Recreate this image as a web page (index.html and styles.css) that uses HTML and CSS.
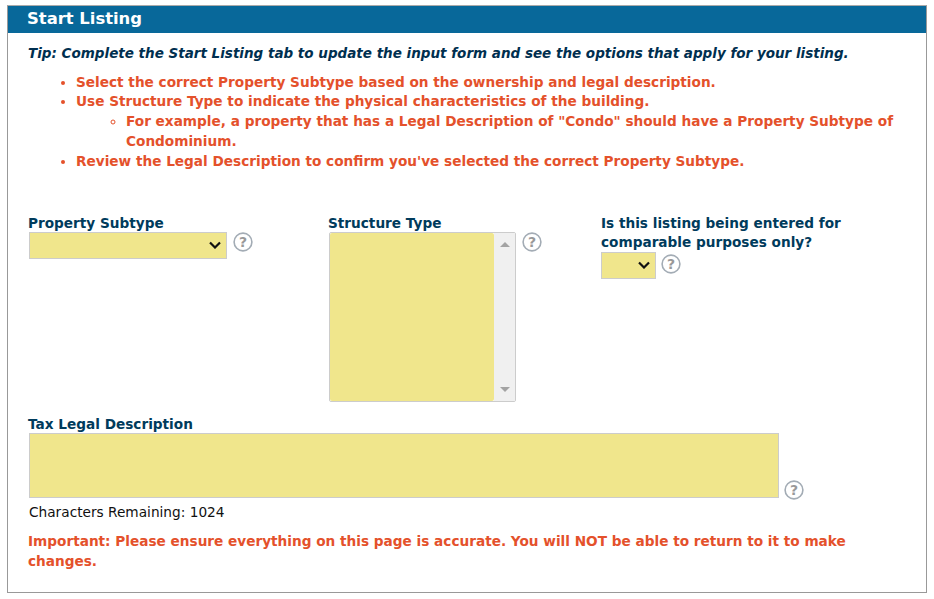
FILE: index.html
```html
<!DOCTYPE html>
<html>
<head>
<meta charset="utf-8">
<title>Start Listing</title>
<link rel="stylesheet" href="styles.css">
</head>
<body>
<div class="panel">
  <div class="panelHeading">Start Listing</div>
  <div class="panelBody">
    <p class="tip">Tip: Complete the Start Listing tab to update the input form and see the options that apply for your listing.</p>
    <ul class="notes">
      <li>Select the correct Property Subtype based on the ownership and legal description.</li>
      <li>Use Structure Type to indicate the physical characteristics of the building.
        <ul>
          <li>For example, a property that has a Legal Description of "Condo" should have a Property Subtype of Condominium.</li>
        </ul>
      </li>
      <li>Review the Legal Description to confirm you've selected the correct Property Subtype.</li>
    </ul>

    <div class="fieldRow">
      <div class="field">
        <label class="fieldLabel" for="subtype">Property Subtype</label>
        <div class="control">
          <select id="subtype" class="dropdown subtypeSelect"><option></option></select>
          <svg class="help" viewBox="0 0 20 20"><circle cx="10" cy="10" r="8.9"/><text x="10" y="15">?</text></svg>
        </div>
      </div>
      <div class="field">
        <label class="fieldLabel" for="structure">Structure Type</label>
        <div class="control">
          <div class="listbox">
            <select id="structure" class="listField" multiple></select>
            <div class="scrollbar">
              <span class="arrowUp"></span>
              <span class="arrowDown"></span>
            </div>
          </div>
          <svg class="help" viewBox="0 0 20 20"><circle cx="10" cy="10" r="8.9"/><text x="10" y="15">?</text></svg>
        </div>
      </div>
      <div class="field">
        <label class="fieldLabel" for="comparable">Is this listing being entered for comparable purposes only?</label>
        <div class="control comparableControl">
          <select id="comparable" class="dropdown comparableSelect"><option></option></select>
          <svg class="help" viewBox="0 0 20 20"><circle cx="10" cy="10" r="8.9"/><text x="10" y="15">?</text></svg>
        </div>
      </div>
    </div>

    <label class="fieldLabel" for="legal">Tax Legal Description</label>
    <div class="control legalControl">
      <textarea id="legal" class="legalText"></textarea>
      <svg class="help" viewBox="0 0 20 20"><circle cx="10" cy="10" r="8.9"/><text x="10" y="15">?</text></svg>
    </div>
    <div class="charCount">Characters Remaining: 1024</div>

    <p class="important">Important: Please ensure everything on this page is accurate. You will NOT be able to return to it to make changes.</p>
  </div>
</div>
</body>
</html>
```

FILE: styles.css
```css
html, body {
  margin: 0;
  padding: 0;
  background-color: #fff;
}

body {
  padding: 5px 7px 6px 7px;
  font: 13.65px "DejaVu Sans", Verdana, sans-serif;
}

.panel {
  width: 920px;
  height: 588px;
  box-sizing: border-box;
  border: 1px solid #999;
  border-top-color: #aaa;
}

.panelHeading {
  height: 27px;
  padding-left: 19px;
  background-color: #08689a;
  color: #fff;
  font-size: 16.4px;
  font-weight: bold;
  line-height: 25px;
}

.panelBody {
  padding: 10px 20px 0 20px;
}

.tip {
  margin: 0 0 9.7px 0;
  color: #002f4f;
  font-size: 13.5px;
  font-weight: bold;
  font-style: italic;
  line-height: 20px;
}

.notes {
  margin: 0;
  padding-left: 48px;
  color: #e4512b;
  font-weight: bold;
  line-height: 19.75px;
}

.notes ul {
  margin: 0;
  padding-left: 50px;
}

.fieldRow {
  display: grid;
  grid-template-columns: 300px 273px 260px;
  height: 201px;
  margin-top: 42.3px;
}

.fieldLabel {
  display: block;
  color: #003b5c;
  font-weight: bold;
  line-height: 19px;
}

.control {
  display: flex;
  align-items: flex-start;
  gap: 6px;
  margin-top: -1px;
  padding-left: 1px;
}

.comparableControl {
  margin-top: 0;
}

.comparableControl .help {
  margin-top: 2px;
  margin-left: -1px;
}

.dropdown {
  appearance: none;
  box-sizing: border-box;
  height: 27px;
  border: 1px solid #ccc;
  border-radius: 0;
  background: #f0e68c url("data:image/svg+xml,%3Csvg xmlns='http://www.w3.org/2000/svg' width='12' height='8'%3E%3Cpath d='M1 1.5l5 5 5-5' fill='none' stroke='%23111' stroke-width='2.2'/%3E%3C/svg%3E") no-repeat right 5px center;
}

.subtypeSelect {
  width: 198px;
}

.comparableSelect {
  width: 55px;
  margin-left: -1px;
}

.listbox {
  display: flex;
  width: 187px;
  height: 170px;
  box-sizing: border-box;
  border: 1px solid #ccc;
  border-radius: 2px;
}

.listField {
  appearance: none;
  flex: 1;
  border: 0;
  outline: 0;
  background-color: #f0e68c;
}

.scrollbar {
  display: flex;
  flex-direction: column;
  justify-content: space-between;
  align-items: center;
  width: 21px;
  padding: 9px 0;
  box-sizing: border-box;
  background-color: #f0f0f0;
}

.arrowUp {
  border-left: 5px solid transparent;
  border-right: 5px solid transparent;
  border-bottom: 5px solid #a3a3a3;
}

.arrowDown {
  border-left: 5px solid transparent;
  border-right: 5px solid transparent;
  border-top: 5px solid #a3a3a3;
}

.help {
  flex: none;
  width: 20px;
  height: 20px;
}

.help circle {
  fill: none;
  stroke: #a3acb5;
  stroke-width: 1.6;
}

.help text {
  fill: #999;
  font-size: 14px;
  font-weight: bold;
  text-anchor: middle;
}

.legalControl {
  align-items: flex-end;
}

.legalText {
  display: block;
  box-sizing: border-box;
  width: 750px;
  height: 65px;
  margin: 0;
  padding: 0;
  border: 1px solid #ccc;
  background-color: #f0e68c;
  outline: 0;
  resize: none;
}

.legalControl .help {
  margin-bottom: -2px;
  margin-left: -1px;
}

.charCount {
  margin-top: 5px;
  padding-left: 1px;
  color: #111;
  font-size: 13.7px;
  line-height: 18px;
}

.important {
  margin: 10px 0 0 0;
  color: #e4512b;
  font-weight: bold;
  line-height: 20px;
}
```
